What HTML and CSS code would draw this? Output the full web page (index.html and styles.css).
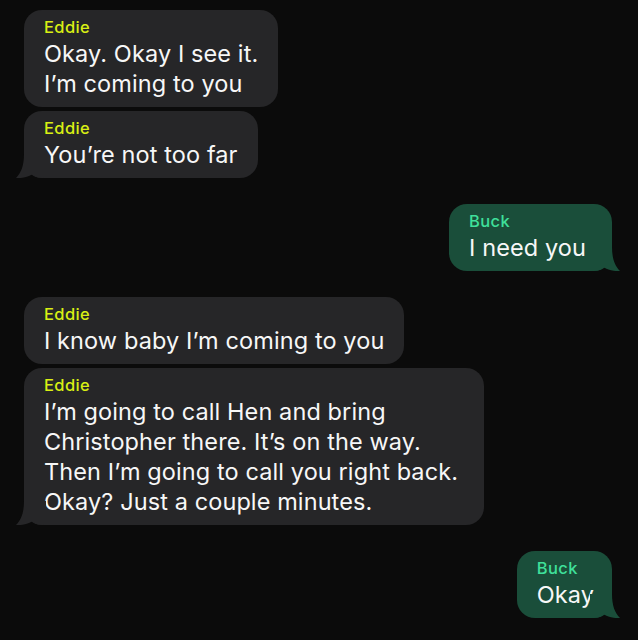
FILE: index.html
```html
<!DOCTYPE html>
<html>
<head>
<meta charset="utf-8">
<link rel="stylesheet" href="styles.css">
</head>
<body>
<div class="chat">
  <div class="bubble in">
    <div class="name eddie">Eddie</div>
    <div class="text">Okay. Okay I see it.<br>I’m coming to you</div>
  </div>
  <div class="bubble in tail grouped">
    <div class="name eddie">Eddie</div>
    <div class="text">You’re not too far</div>
    <svg class="tail-svg" viewBox="0 0 30 24" width="30" height="24"><path d="M8 0 C8 12 5 19 0 24 C6 24.5 12 23 16 20.5 C19 23 23 24 30 24 L30 0 Z"/></svg>
  </div>
  <div class="bubble out tail roomy">
    <div class="name buck">Buck</div>
    <div class="text">I need you</div>
    <svg class="tail-svg" viewBox="0 0 30 24" width="30" height="24"><path d="M8 0 C8 12 5 19 0 24 C6 24.5 12 23 16 20.5 C19 23 23 24 30 24 L30 0 Z"/></svg>
  </div>
  <div class="bubble in">
    <div class="name eddie">Eddie</div>
    <div class="text">I know baby I’m coming to you</div>
  </div>
  <div class="bubble in tail grouped roomy">
    <div class="name eddie">Eddie</div>
    <div class="text">I’m going to call Hen and bring<br>Christopher there. It’s on the way.<br>Then I’m going to call you right back.<br>Okay? Just a couple minutes.</div>
    <svg class="tail-svg" viewBox="0 0 30 24" width="30" height="24"><path d="M8 0 C8 12 5 19 0 24 C6 24.5 12 23 16 20.5 C19 23 23 24 30 24 L30 0 Z"/></svg>
  </div>
  <div class="bubble out tail snug">
    <div class="name buck">Buck</div>
    <div class="text">Okay</div>
    <svg class="tail-svg" viewBox="0 0 30 24" width="30" height="24"><path d="M8 0 C8 12 5 19 0 24 C6 24.5 12 23 16 20.5 C19 23 23 24 30 24 L30 0 Z"/></svg>
  </div>
</div>
</body>
</html>
```
FILE: styles.css
```css
html, body {
  margin: 0;
  padding: 0;
  background: #0b0b0b;
}
body {
  width: 638px;
  height: 640px;
  overflow: hidden;
  font-family: Inter, "Noto Sans", "Liberation Sans", sans-serif;
}
.chat {
  display: flex;
  flex-direction: column;
  padding: 10px 26px 0 24px;
}
.bubble {
  position: relative;
  padding: 6px 20px 8px 20px;
  border-radius: 18px;
  margin-top: 26px;
}
.bubble:first-child {
  margin-top: 0;
}
.bubble.grouped {
  margin-top: 4px;
}
.bubble.roomy {
  padding-right: 26px;
}
.bubble.snug {
  padding-right: 18px;
}
.in {
  align-self: flex-start;
  background: #262628;
  fill: #262628;
}
.out {
  align-self: flex-end;
  background: #1a4e3a;
  fill: #1a4e3a;
}
.name {
  font-size: 16.5px;
  line-height: 23px;
  font-weight: 500;
  letter-spacing: 0.4px;
}
.eddie {
  color: #d9ef14;
}
.buck {
  color: #3fe09b;
}
.text {
  font-size: 23.5px;
  line-height: 30px;
  color: #f7f7f7;
  letter-spacing: 0.1px;
  white-space: nowrap;
}
.tail-svg {
  position: absolute;
  bottom: 0;
  display: block;
}
.in .tail-svg {
  left: -8px;
}
.out .tail-svg {
  right: -8px;
  transform: scaleX(-1);
}
```
